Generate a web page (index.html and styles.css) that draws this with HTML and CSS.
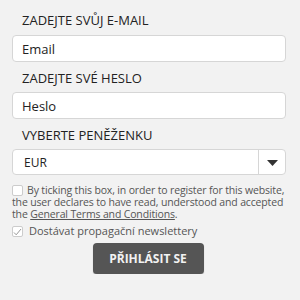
FILE: index.html
```html
<!DOCTYPE html>
<html>
<head>
<meta charset="utf-8">
<link rel="stylesheet" href="styles.css">
</head>
<body>
<form class="form">
  <label class="label">ZADEJTE SVŮJ E-MAIL</label>
  <input class="input" type="text" placeholder="Email">
  <label class="label">ZADEJTE SVÉ HESLO</label>
  <input class="input" type="password" placeholder="Heslo">
  <label class="label">VYBERTE PENĚŽENKU</label>
  <div class="select">
    <span class="select-value">EUR</span>
    <span class="select-btn"><svg width="11" height="6" viewBox="0 0 11 6"><path d="M0 0H11L5.5 6Z" fill="#333"/></svg></span>
  </div>
  <div class="terms">
    <div class="line"><span class="box"></span>By ticking this box, in order to register for this website,</div>
    <div class="line">the user declares to have read, understood and accepted</div>
    <div class="line">the <a class="link">General Terms and Conditions</a>.</div>
  </div>
  <p class="news"><span class="box"><svg width="9" height="8" viewBox="0 0 9 8"><path d="M1 4.5L3.2 6.8L8 1" fill="none" stroke="#999" stroke-width="1"/></svg></span>Dostávat propagační newslettery</p>
  <div class="actions"><button class="btn" type="button">PŘIHLÁSIT SE</button></div>
</form>
</body>
</html>
```
FILE: styles.css
```css
html, body {
  margin: 0;
  background: #f2f2f2;
}
body {
  font-family: "Open Sans", "DejaVu Sans", sans-serif;
  color: #222;
}
.form {
  display: flex;
  flex-direction: column;
  padding: 12px 14px 0 12px;
}
.label {
  display: block;
  font-size: 13px;
  line-height: 16px;
  margin: 8px 0 6px 10px;
  color: #222;
}
.label:first-child {
  margin-top: 0;
  margin-bottom: 7px;
}
.input {
  box-sizing: border-box;
  height: 27px;
  width: 100%;
  border: 1px solid #d6d6d6;
  border-radius: 4px;
  background: #fff;
  padding: 0 9px;
  font-family: inherit;
  font-size: 13px;
  color: #222;
  outline: none;
}
.input::placeholder {
  color: #222;
  opacity: 1;
}
.select {
  box-sizing: border-box;
  height: 26px;
  display: flex;
  align-items: stretch;
  border: 1px solid #d6d6d6;
  border-radius: 4px;
  background: #fff;
}
.select-value {
  flex: 1;
  display: flex;
  align-items: center;
  padding-left: 11px;
  font-size: 12px;
}
.select-btn {
  width: 26px;
  border-left: 1px solid #d6d6d6;
  display: flex;
  align-items: center;
  justify-content: center;
  padding-top: 1px;
}
.terms {
  margin: 9px 0 0 0;
  font-size: 10.5px;
  letter-spacing: -0.15px;
  color: #555;
  white-space: nowrap;
}
.line {
  height: 12px;
  line-height: 12px;
}
.box {
  display: inline-block;
  box-sizing: border-box;
  width: 11px;
  height: 11px;
  border: 1px solid #ccc;
  border-radius: 2px;
  background: #fff;
  vertical-align: -2px;
  margin-right: 4px;
  position: relative;
}
.box svg {
  position: absolute;
  left: 0;
  top: 1px;
}
.link {
  color: #555;
  text-decoration: underline;
}
.news {
  margin: 5px 0 0 0;
  font-size: 11px;
  line-height: 12px;
  color: #555;
}
.news .box {
  margin-right: 6px;
}
.actions {
  display: flex;
  justify-content: center;
  margin-top: 6px;
  padding-right: 2px;
}
.btn {
  width: 111px;
  height: 31px;
  border: none;
  border-radius: 4px;
  background: #555;
  color: #f2f2f2;
  font-family: inherit;
  font-weight: bold;
  font-size: 12px;
  box-shadow: 0 1px 1px rgba(0,0,0,0.3);
}
```
